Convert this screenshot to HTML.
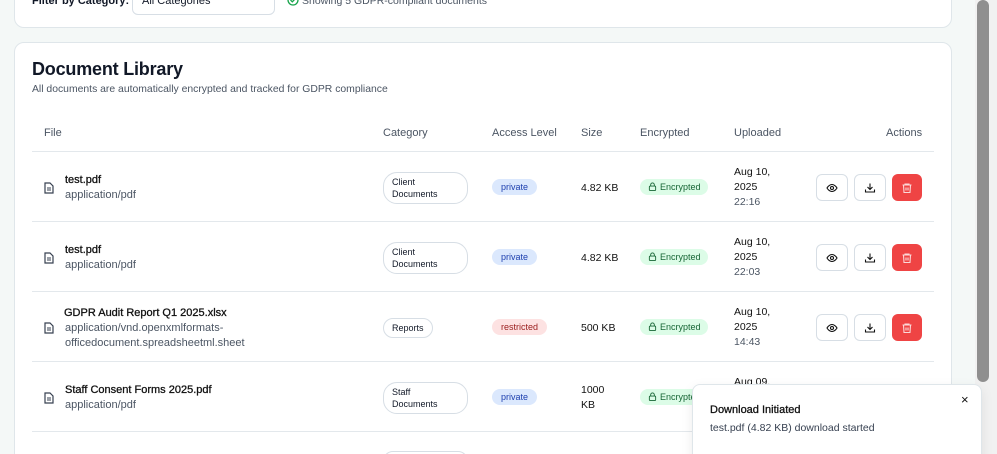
<!DOCTYPE html>
<html><head><meta charset="utf-8"><style>
*{box-sizing:border-box;margin:0;padding:0}
html,body{width:997px;height:454px;overflow:hidden}
body{background:#f4f8f7;font-family:"Liberation Sans",sans-serif;color:#111827;position:relative}
.card{position:absolute;background:#fff;border:1px solid #dfe6ea;border-radius:10px}
.a{position:absolute;white-space:nowrap}
.hdr{font-size:11px;color:#4b5563}
.line{position:absolute;left:32px;width:902px;height:1px;background:#e3e8ec}
.fn{font-size:11px;color:#111;-webkit-text-stroke:0.3px #111}
.mt{font-size:11px;color:#4b5563;line-height:15px}
.cat{position:absolute;border:1px solid #d7dee5;border-radius:14px;font-size:9px;line-height:12px;padding:3px 8px;background:#fff}
.pill{position:absolute;border-radius:8px;font-size:9px;height:16px;line-height:16px;padding:0 9px}
.pv{background:#dbe8fd;color:#1e40af}
.rs{background:#fde2e2;color:#991b1b}
.enc{position:absolute;background:#dcfce7;color:#166534;border-radius:8px;font-size:9px;height:16px;line-height:16px;padding:0 7px 0 8px}
.sz{font-size:10.5px;color:#111}
.dt{font-size:10.5px;line-height:15px;color:#111}
.dt span{color:#4b5563}
.btn{position:absolute;width:32px;height:27px;border:1px solid #d7dee5;border-radius:6px;background:#fff;display:flex;align-items:center;justify-content:center}
.del{background:#ef4444;border-color:#ef4444;width:30px}
</style></head><body>
<div class="card" style="left:14px;top:-20px;width:938px;height:48px"></div>
<div class="a" style="left:32px;top:-5px;font-size:11px;font-weight:bold">Filter by Category:</div>
<div class="a" style="left:132px;top:-12px;width:143px;height:27px;border:1px solid #d7dee5;border-radius:6px;background:#fff"></div>
<div class="a" style="left:142px;top:-5px;font-size:11px">All Categories</div>
<svg class="a" style="left:287px;top:-6px" width="12" height="12" viewBox="0 0 12 12"><circle cx="6" cy="6" r="5" fill="none" stroke="#16a34a" stroke-width="1.3"/><path d="M3.5 6l1.8 1.8L8.5 4.5" fill="none" stroke="#16a34a" stroke-width="1.3"/></svg>
<div class="a" style="left:302px;top:-5px;font-size:10.5px;color:#4b5563">Showing 5 GDPR-compliant documents</div>

<div class="card" style="left:14px;top:42px;width:938px;height:430px"></div>
<div class="a" style="left:32px;top:59px;font-size:18px;font-weight:bold;letter-spacing:-0.2px">Document Library</div>
<div class="a" style="left:32px;top:84px;font-size:10.4px;color:#4b5563">All documents are automatically encrypted and tracked for GDPR compliance</div>
<div class="a hdr" style="left:44px;top:127px">File</div>
<div class="a hdr" style="left:383px;top:127px">Category</div>
<div class="a hdr" style="left:492px;top:127px">Access Level</div>
<div class="a hdr" style="left:581px;top:127px">Size</div>
<div class="a hdr" style="left:640px;top:127px">Encrypted</div>
<div class="a hdr" style="left:734px;top:127px">Uploaded</div>
<div class="a hdr" style="left:886px;top:127px">Actions</div>
<div class="line" style="top:151px"></div>
<div class="line" style="top:221px"></div>
<div class="line" style="top:291px"></div>
<div class="line" style="top:361px"></div>
<div class="line" style="top:431px"></div>

<div id="rows"></div>
<script>
var rows=[
 {t:151,n:"test.pdf",m:["application/pdf"],c:["Client","Documents"],p:"private",s:["4.82 KB"],d:"22:16",day:"Aug 10,"},
 {t:221,n:"test.pdf",m:["application/pdf"],c:["Client","Documents"],p:"private",s:["4.82 KB"],d:"22:03",day:"Aug 10,"},
 {t:291,n:"GDPR Audit Report Q1 2025.xlsx",m:["application/vnd.openxmlformats-","officedocument.spreadsheetml.sheet"],c:["Reports"],p:"restricted",s:["500 KB"],d:"14:43",day:"Aug 10,"},
 {t:361,n:"Staff Consent Forms 2025.pdf",m:["application/pdf"],c:["Staff","Documents"],p:"private",s:["1000","KB"],d:"",day:"Aug 09,"}
];
var h="";
var doc='<svg width="10" height="12" viewBox="0 0 10 12"><path d="M1 1h5l3 3v7H1z" fill="none" stroke="#374151" stroke-width="1.2"/><path d="M3 6h4M3 8h4" stroke="#374151" stroke-width="1"/></svg>';
var eye='<svg width="12" height="12" viewBox="0 0 24 24" fill="none" stroke="#111" stroke-width="2.2"><path d="M2 12s4-7 10-7 10 7 10 7-4 7-10 7S2 12 2 12z"/><circle cx="12" cy="12" r="3"/></svg>';
var dl='<svg width="12" height="12" viewBox="0 0 24 24" fill="none" stroke="#111" stroke-width="2.2"><path d="M12 3v12M7 10l5 5 5-5M3 15v5h18v-5"/></svg>';
var tr='<svg width="12" height="12" viewBox="0 0 24 24" fill="none" stroke="#fff" stroke-width="2.2" opacity=".8"><path d="M3 6h18M8 6V4h8v2M5 6l1 15h12l1-15M10 11v6M14 11v6"/></svg>';
var lock='<svg width="9" height="9" viewBox="0 0 10 10" style="vertical-align:-1px;margin-right:3px"><rect x="1.5" y="4.5" width="7" height="5" rx="1" fill="none" stroke="#166534"/><path d="M3 4.5V3a2 2 0 014 0v1.5" fill="none" stroke="#166534"/></svg>';
rows.forEach(function(r,i){
 var t=r.t, mid=t+35;
 var ml=r.m.length;
 var top=mid-(15+ml*15)/2+3;
 h+='<div class="a" style="left:44px;top:'+(mid-5)+'px">'+doc+'</div>';
 h+='<div class="a fn" style="left:'+(ml>1?64:65)+'px;top:'+top+'px">'+r.n+'</div>';
 h+='<div class="a mt" style="left:65px;top:'+(top+14)+'px">'+r.m.join('<br>')+'</div>';
 var ch=r.c.length*12+6;
 h+='<div class="cat" style="left:383px;top:'+(mid-ch/2+1)+'px;'+(r.c.length>1?'width:85px':'')+'">'+r.c.join('<br>')+'</div>';
 h+='<div class="pill '+(r.p=="private"?"pv":"rs")+'" style="left:492px;top:'+(mid-7)+'px">'+r.p+'</div>';
 h+='<div class="a sz" style="left:581px;top:'+(mid-(r.s.length*15)/2+2)+'px;line-height:15px">'+r.s.join('<br>')+'</div>';
 h+='<div class="enc" style="left:640px;top:'+(mid-7)+'px">'+lock+'Encrypted</div>';
 h+='<div class="a dt" style="left:734px;top:'+(mid-21)+'px">'+r.day+'<br>2025<br><span>'+r.d+'</span></div>';
 h+='<div class="btn" style="left:816px;top:'+(mid-12)+'px">'+eye+'</div>';
 h+='<div class="btn" style="left:854px;top:'+(mid-12)+'px">'+dl+'</div>';
 h+='<div class="btn del" style="left:892px;top:'+(mid-12)+'px">'+tr+'</div>';
});
h+='<div class="cat" style="left:383px;top:451px;width:85px;height:20px"></div>';
document.getElementById('rows').innerHTML=h;
</script>

<div class="a" style="left:975px;top:0;width:22px;height:454px;background:#f1f1f1"></div>
<div class="a" style="left:977px;top:0;width:12px;height:382px;background:#8f8f8f;border-radius:6px"></div>

<div class="a" style="left:692px;top:384px;width:290px;height:80px;background:#fff;border:1px solid #dfe6ea;border-radius:8px;box-shadow:0 4px 12px rgba(0,0,0,.08)"></div>
<div class="a" style="left:710px;top:404px;font-size:11px;color:#111;-webkit-text-stroke:0.3px #111">Download Initiated</div>
<div class="a" style="left:710px;top:422px;font-size:10.5px;color:#374151">test.pdf (4.82 KB) download started</div>
<div class="a" style="left:961px;top:392px;font-size:13px;color:#111">×</div>
</body></html>
